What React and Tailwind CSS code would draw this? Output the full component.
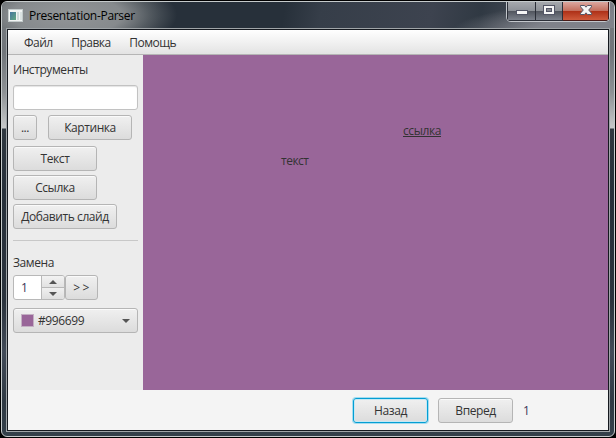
import React from 'react';

const btnBase =
  'flex items-center justify-center rounded-[3px] border bg-gradient-to-b from-[#f0f0f0] to-[#dcdcdc] whitespace-nowrap text-[#333333]';
const btnIdle = 'border-[#b5b5b5] shadow-[inset_0_1px_0_#fafafa]';
const btnFocused = 'border-[#039ed3] shadow-[0_0_0_1px_#a5dcef,inset_0_0_0_1px_#c5e8f4]';

function Button({ className = '', focused = false, children }) {
  return <button className={`${btnBase} ${focused ? btnFocused : btnIdle} ${className}`}>{children}</button>;
}

function AppIcon() {
  return (
    <svg width="15" height="13" viewBox="0 0 15 13" shapeRendering="crispEdges">
      <defs>
        <linearGradient id="pane" x1="0" y1="0" x2="1" y2="1">
          <stop offset="0" stopColor="#44759f" />
          <stop offset="1" stopColor="#64a881" />
        </linearGradient>
      </defs>
      <rect x="0.5" y="0.5" width="14" height="12" fill="#f2f4f4" stroke="#c4cccc" />
      <rect x="2" y="3" width="6" height="8" fill="url(#pane)" />
      <rect x="9" y="3" width="2" height="8" fill="#cfdada" />
      <rect x="12" y="3" width="2" height="8" fill="#dbe2e2" />
    </svg>
  );
}

function WindowControls() {
  return (
    <div className="flex h-[20px] w-[104px] overflow-hidden rounded-b-[5px] border border-t-0 border-[#c3c7cc] bg-[#30343c]">
      <div className="flex w-[29px] justify-center border-b border-l border-r border-[#2b2f38] bg-[linear-gradient(#a5a8ad,#8d9197_48%,#50545d_50%,#7c818b)] pt-[8px]">
        <svg width="12" height="5" shapeRendering="crispEdges">
          <rect x="0.5" y="0.5" width="11" height="4" fill="#f5f5f5" stroke="#535666" />
        </svg>
      </div>
      <div className="flex w-[27px] justify-center border-b border-r border-[#2b2f38] bg-[linear-gradient(#a5a8ad,#8d9197_48%,#50545d_50%,#7c818b)] pt-[3px]">
        <svg width="12" height="10" shapeRendering="crispEdges">
          <rect x="0.5" y="0.5" width="11" height="9" fill="#f5f5f5" stroke="#535666" />
          <rect x="3.5" y="3.5" width="5" height="3" fill="#85878e" stroke="#535666" />
        </svg>
      </div>
      <div className="flex flex-1 justify-center border-b border-r border-[#4a1a16] bg-[linear-gradient(#dba79f,#c4705f_48%,#ad2f16_50%,#cf5b3c)] pt-[3px]">
        <svg width="12" height="10" viewBox="0 0 12 10">
          <path
            d="M.5 .5h4L6 2.200 7.500.5h4v1.300L8.700 5l2.800 3.200v1.300h-4L6 7.800 4.500 9.500h-4V8.200L3.300 5 .5 1.800z"
            fill="#f5f5f5"
            stroke="#535666"
          />
        </svg>
      </div>
    </div>
  );
}

function TitleBar() {
  return (
    <div className="flex h-[26px] justify-between bg-[radial-gradient(ellipse_110px_40px_at_65px_13px,#929597_0%,#868a8d_50%,rgba(110,116,120,0.6)_75%,rgba(60,68,76,0)_100%),radial-gradient(ellipse_160px_30px_at_610px_30px,#7f828a_0%,#7f828a_50%,rgba(127,130,138,0)_100%),linear-gradient(100deg,#5c6265_0%,#444b51_14%,#27303a_26%,#27303a_46%,#363e49_52%,#3d434f_70%,#303943_78%,#454b55_86%,#7d8088_100%)] pl-[6px] pr-[4px]">
      <div className="flex items-center gap-[6px] pt-px">
        <AppIcon />
        <span className="text-[12px] leading-4 tracking-[-0.3px] text-black">Presentation-Parser</span>
      </div>
      <WindowControls />
    </div>
  );
}

function Sidebar() {
  return (
    <aside className="flex w-[135px] flex-col bg-[#ececec] px-[5px]">
      <div className="mt-[7px] h-4 leading-4">Инструменты</div>
      <input className="mt-[7px] h-[25px] w-[125px] rounded-[3px] border border-[#c2c2c2] bg-white shadow-[inset_0_1px_1px_#e4e4e4]" />
      <div className="mt-[5px] flex gap-[11px]">
        <Button className="h-[25px] w-[24px]">...</Button>
        <Button className="h-[25px] w-[84px]">Картинка</Button>
      </div>
      <Button className="mt-[6px] h-[25px] w-[84px]">Текст</Button>
      <Button className="mt-[4px] h-[25px] w-[84px]">Ссылка</Button>
      <Button className="mt-[4px] h-[25px] w-[104px]">Добавить слайд</Button>
      <div className="mt-[11px] h-px bg-[#c8c8c8]" />
      <div className="mt-[14px] h-4 leading-4">Замена</div>
      <div className="mt-[4px] flex">
        <div className="flex h-[25px] w-[52px] overflow-hidden rounded-[3px] border border-[#b8b8b8] bg-white">
          <div className="flex w-[27px] items-center pl-[7px] text-[#3b3558]">1</div>
          <div className="flex flex-1 flex-col border-l border-[#b8b8b8]">
            <div className="flex flex-1 items-center justify-center border-b border-[#b8b8b8] bg-gradient-to-b from-[#f2f2f2] to-[#e2e2e2]">
              <svg width="8" height="4"><path d="M0 4L4 0l4 4z" fill="#555" /></svg>
            </div>
            <div className="flex flex-1 items-center justify-center bg-gradient-to-b from-[#f0f0f0] to-[#dedede]">
              <svg width="8" height="4"><path d="M0 0l4 4 4-4z" fill="#555" /></svg>
            </div>
          </div>
        </div>
        <Button className="h-[25px] w-[33px] pl-[2px] tracking-[2.5px]">&gt;&gt;</Button>
      </div>
      <Button className="mt-[8px] h-[25px] w-[125px] px-[7px]">
        <span className="h-[13px] w-[13px] border border-[#c3b0c3] bg-[#996699]" />
        <span className="ml-[4px] flex-1 text-left tracking-[-0.4px]">#996699</span>
        <svg width="8" height="4"><path d="M0 0l4 4 4-4z" fill="#555" /></svg>
      </Button>
    </aside>
  );
}

export default function App() {
  return (
    <div className="h-[438px] w-[616px] overflow-hidden bg-black p-px font-['Open_Sans','Noto_Sans',sans-serif] text-[12px] leading-4 tracking-[-0.42px] text-[#333333]">
      <div className="h-[436px] w-[614px] overflow-hidden rounded-[6px] border border-[#c5cacb] bg-[linear-gradient(#777c80_0px,#70757a_50px,#8d9194_90px,#c6c8c9_126px,#303840_127px,#27303a_190px,#2b333d_300px,#424b58_350px,#2f3943_400px,#34404a_434px)]">
        <TitleBar />
        <div className="ml-[4px] h-[404px] w-[604px] border border-[#a0a5a8]">
          <div className="flex h-[402px] w-[602px] flex-col border border-[#15191f]">
            <nav className="flex h-[25px] items-center gap-[18.5px] border-b border-[#b5b5b5] bg-gradient-to-b from-white to-[#e3e3e3] pl-[16px] pt-px tracking-[-0.5px]">
              <span>Файл</span>
              <span>Правка</span>
              <span>Помощь</span>
            </nav>
            <div className="flex h-[335px]">
              <Sidebar />
              <main className="flex-1 bg-[#996699]">
                <div className="h-[83px] pl-[260px] pt-[68px] tracking-[-0.4px]">
                  <span className="inline-block h-[14px] border-b border-[#333333] leading-4">ссылка</span>
                </div>
                <div className="pl-[138px] pt-[15px] tracking-[-0.5px]">текст</div>
              </main>
            </div>
            <footer className="flex flex-1 items-center bg-[#f4f4f4] pl-[345px]">
              <Button focused className="h-[25px] w-[75px] pt-px">Назад</Button>
              <Button className="ml-[10px] h-[25px] w-[75px] pt-px">Вперед</Button>
              <span className="ml-[10px] pt-px text-[#3b3558]">1</span>
            </footer>
          </div>
        </div>
      </div>
    </div>
  );
}
